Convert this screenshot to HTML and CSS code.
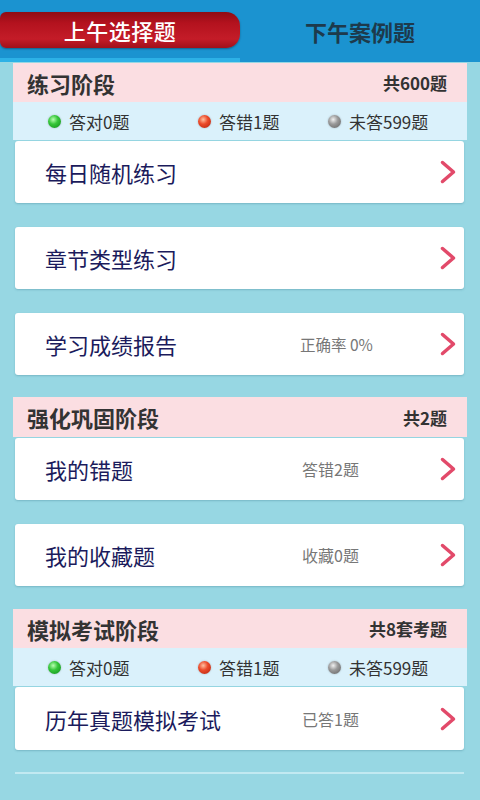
FILE: index.html
```html
<!DOCTYPE html>
<html lang="zh">
<head>
<meta charset="utf-8">
<link rel="stylesheet" href="styles.css">
</head>
<body>
<div class="tabs">
  <div class="tab active"><span class="pill">上午选择题</span></div>
  <div class="tab"><span class="label">下午案例题</span></div>
</div>
<main class="content">
  <section class="group">
    <div class="ghead"><span class="gtitle">练习阶段</span><span class="gcount">共600题</span></div>
    <div class="stats">
      <span class="stat s1"><i class="dot green"></i>答对0题</span>
      <span class="stat s2"><i class="dot red"></i>答错1题</span>
      <span class="stat s3"><i class="dot gray"></i>未答599题</span>
    </div>
    <div class="card first"><span class="ctitle">每日随机练习</span><span class="csub"></span><svg class="chev" viewBox="0 0 16 24"><path d="M2.5 2.5 L13.5 12 L2.5 21.5" /></svg></div>
    <div class="card"><span class="ctitle">章节类型练习</span><span class="csub"></span><svg class="chev" viewBox="0 0 16 24"><path d="M2.5 2.5 L13.5 12 L2.5 21.5" /></svg></div>
    <div class="card"><span class="ctitle">学习成绩报告</span><span class="csub wide">正确率 0%</span><svg class="chev" viewBox="0 0 16 24"><path d="M2.5 2.5 L13.5 12 L2.5 21.5" /></svg></div>
  </section>
  <section class="group g2">
    <div class="ghead"><span class="gtitle">强化巩固阶段</span><span class="gcount">共2题</span></div>
    <div class="card first"><span class="ctitle">我的错题</span><span class="csub">答错2题</span><svg class="chev" viewBox="0 0 16 24"><path d="M2.5 2.5 L13.5 12 L2.5 21.5" /></svg></div>
    <div class="card"><span class="ctitle">我的收藏题</span><span class="csub">收藏0题</span><svg class="chev" viewBox="0 0 16 24"><path d="M2.5 2.5 L13.5 12 L2.5 21.5" /></svg></div>
  </section>
  <section class="group g3">
    <div class="ghead"><span class="gtitle">模拟考试阶段</span><span class="gcount">共8套考题</span></div>
    <div class="stats">
      <span class="stat s1"><i class="dot green"></i>答对0题</span>
      <span class="stat s2"><i class="dot red"></i>答错1题</span>
      <span class="stat s3"><i class="dot gray"></i>未答599题</span>
    </div>
    <div class="card first"><span class="ctitle">历年真题模拟考试</span><span class="csub">已答1题</span><svg class="chev" viewBox="0 0 16 24"><path d="M2.5 2.5 L13.5 12 L2.5 21.5" /></svg></div>
  </section>
  <div class="rule"></div>
</main>
</body>
</html>
```

FILE: styles.css
```css
* { box-sizing: border-box; }
html, body {
  margin: 0;
  padding: 0;
  background: #97d7e3;
  font-family: "Noto Sans CJK SC", "Noto Sans", sans-serif;
}
body { width: 480px; height: 800px; overflow: hidden; }

.tabs {
  display: flex;
  height: 62px;
  background: #1b93d0;
}
.tab {
  flex: 1;
  display: flex;
  align-items: flex-start;
  justify-content: center;
}
.tab.active {
  justify-content: stretch;
  flex-direction: column;
  border-bottom: 4px solid #2db1e6;
}
.pill {
  display: flex;
  align-items: center;
  justify-content: center;
  margin-top: 12px;
  height: 36px;
  width: 240px;
  border-radius: 6px 14px 14px 6px;
  background: linear-gradient(#8f0c14 0%, #b3121e 30%, #c41c28 75%, #a0101a 100%);
  box-shadow: 0 1px 2px rgba(0,0,0,0.35);
  color: #fff;
  font-size: 22px;
  font-weight: 500;
  letter-spacing: 0.5px;
}
.label {
  margin-top: 13px;
  color: #1d3a4c;
  font-size: 22px;
  font-weight: 700;
  line-height: 36px;
}

.content {
  padding: 1px 13px 0 13px;
}
.group { display: flex; flex-direction: column; }
.g2 { margin-top: 22px; }
.g3 { margin-top: 23px; }

.ghead {
  display: flex;
  align-items: center;
  justify-content: space-between;
  height: 39px;
  padding: 0 20px 0 14px;
  background: #fbdee2;
}
.g2 .ghead { height: 40px; }
.gtitle {
  font-size: 22px;
  font-weight: 700;
  color: #333;
}
.gcount {
  font-size: 17px;
  font-weight: 700;
  color: #333;
}

.stats {
  display: flex;
  align-items: center;
  height: 38px;
  padding-left: 35px;
  background: #daf1fb;
  font-size: 17px;
  color: #333;
}
.stat { display: flex; align-items: center; }
.s1 { width: 150px; }
.s2 { width: 130px; }
.dot {
  display: inline-block;
  width: 13px;
  height: 13px;
  border-radius: 50%;
  margin-right: 8px;
  box-shadow: 0 0 2px rgba(0,0,0,0.25);
}
.dot.green { background: radial-gradient(circle at 40% 35%, #b8ffb0 0%, #36c63a 40%, #0d8a17 100%); }
.dot.red { background: radial-gradient(circle at 40% 35%, #ffc0a0 0%, #ec4b2a 40%, #b0200c 100%); }
.dot.gray { background: radial-gradient(circle at 40% 35%, #f0f0f0 0%, #9a9a9a 40%, #5e5e5e 100%); }

.card {
  display: grid;
  grid-template-columns: 255px 1fr 16px;
  align-items: center;
  height: 62px;
  margin: 24px 3px 0 2px;
  padding: 0 8px 0 30px;
  background: #fff;
  border-radius: 3px;
  box-shadow: 0 1px 2px rgba(60,120,140,0.35);
}
.card.first { margin-top: 1px; }
.g3 .card.first { height: 63px; }
.ctitle {
  font-size: 22px;
  color: #1b1b5c;
}
.csub {
  font-size: 16px;
  color: #777;
  padding-left: 2px;
}
.csub.wide { padding-left: 0; font-size: 15.5px; }
.chev {
  width: 16px;
  height: 24px;
  fill: none;
  stroke: #e24a6a;
  stroke-width: 3.5;
  stroke-linecap: round;
  stroke-linejoin: round;
}

.rule {
  height: 2px;
  margin: 22px 3px 0 2px;
  background: #c2e9f1;
}
```
